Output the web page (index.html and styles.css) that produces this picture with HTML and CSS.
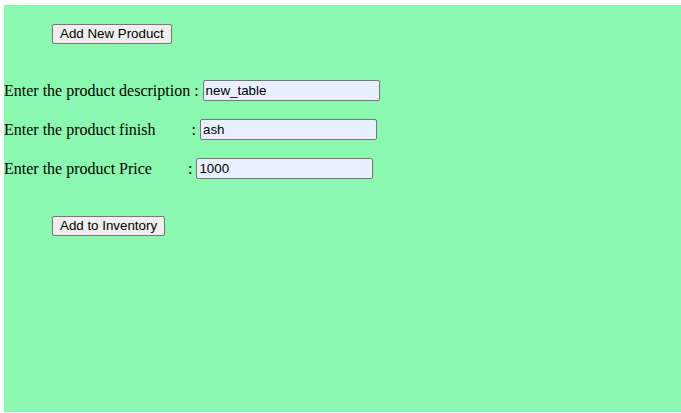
FILE: index.html
```html
<!DOCTYPE html>
<html>
<head>
<meta charset="utf-8">
<link rel="stylesheet" href="styles.css">
</head>
<body>
<div class="page">
  <div class="bar"><button class="btn">Add New Product</button></div>
  <div class="rows">
    <div class="row"><span class="label">Enter the product description : </span><input class="field" type="text" value="new_table"></div>
    <div class="row"><span class="label">Enter the product finish         : </span><input class="field" type="text" value="ash"></div>
    <div class="row"><span class="label">Enter the product Price         : </span><input class="field" type="text" value="1000"></div>
  </div>
  <div class="bar bar-bottom"><button class="btn">Add to Inventory</button></div>
</div>
</body>
</html>
```
FILE: styles.css
```css
html, body {
  margin: 0;
  padding: 0;
  background: #ffffff;
}
.page {
  margin: 5px 0 0 4px;
  height: 407px;
  background: #8af9af;
  font-family: "Liberation Serif", "Times New Roman", serif;
  font-size: 16px;
  color: #000;
  padding-top: 18px;
  box-sizing: border-box;
}
.bar {
  padding-left: 48px;
  height: 21px;
  display: flex;
  align-items: center;
}
.bar-bottom {
  margin-top: 36px;
}
.btn {
  font-family: "Liberation Sans", Arial, sans-serif;
  font-size: 13.33px;
  height: 20px;
  padding: 0 7px;
  background: #efefef;
  border: 1px solid #767676;
  border-radius: 2px;
  color: #000;
  line-height: 16px;
}
.rows {
  margin-top: 36px;
  display: flex;
  flex-direction: column;
  gap: 18px;
}
.row {
  display: flex;
  align-items: center;
  height: 21px;
}
.label {
  white-space: pre;
}
.field {
  width: 177px;
  height: 21px;
  box-sizing: border-box;
  border: 1px solid #767676;
  border-radius: 2px;
  padding: 1px 2px;
  background: #e8f0fe;
  font-family: "Liberation Sans", Arial, sans-serif;
  font-size: 13.33px;
  color: #000;
  margin: 0;
}
```
